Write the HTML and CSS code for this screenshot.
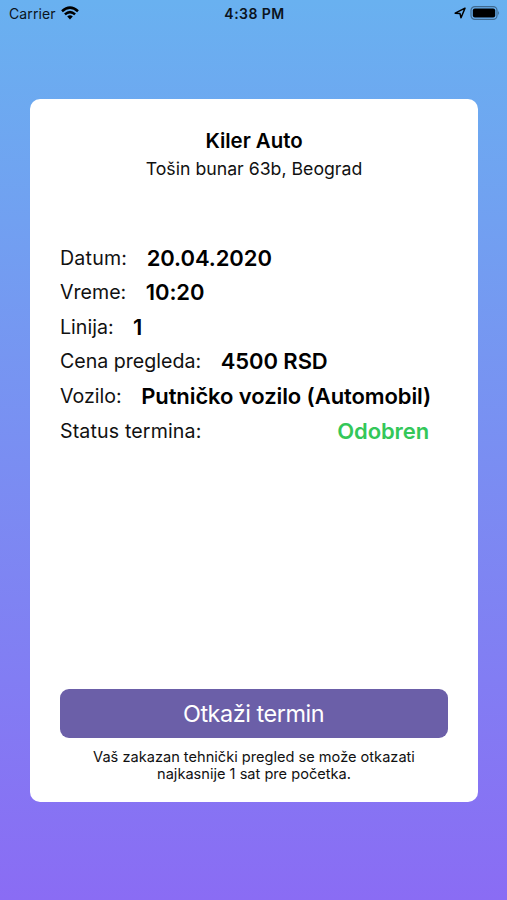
FILE: index.html
```html
<!DOCTYPE html>
<html lang="sr">
<head>
<meta charset="utf-8">
<title>Kiler Auto</title>
<link rel="stylesheet" href="styles.css">
</head>
<body>
<header class="status">
  <div class="carrier"><span class="carrier-name">Carrier</span>
    <svg class="wifi" viewBox="0 0 18 14" width="18" height="14"><g fill="none" stroke="#000" stroke-width="2.5"><path d="M1 5.2Q9-2 17 5.2"/><path d="M3.9 8.4Q9 3.9 14.1 8.4"/></g><path d="M6.2 10.4Q9 8.1 11.8 10.4L9 13.4z"/></svg>
  </div>
  <span class="time">4:38 PM</span>
  <div class="right">
    <svg viewBox="0 0 12 12" width="12" height="12"><path d="M1.2 6.2 11 1.2 7 10.8 6 6.6z" fill="none" stroke="#000" stroke-width="1.5" stroke-linejoin="round"/></svg>
    <svg viewBox="0 0 30 14" width="30" height="14"><rect x="1" y=".6" width="26" height="12.8" rx="3.8" fill="none" stroke="#000" stroke-opacity=".4" stroke-width="1.2"/><rect x="2.8" y="2.5" width="22.4" height="9" rx="2"/><path d="M28.2 4.8q1.8 2.2 0 4.4z" fill-opacity=".45"/></svg>
  </div>
</header>
<main class="card">
  <h1 class="name">Kiler Auto</h1>
  <p class="address">Tošin bunar 63b, Beograd</p>
  <dl class="details">
    <div class="row"><dt class="date">Datum:</dt><dd>20.04.2020</dd></div>
    <div class="row"><dt>Vreme:</dt><dd>10:20</dd></div>
    <div class="row"><dt>Linija:</dt><dd>1</dd></div>
    <div class="row"><dt>Cena pregleda:</dt><dd>4500 RSD</dd></div>
    <div class="row"><dt>Vozilo:</dt><dd class="vehicle">Putničko vozilo (Automobil)</dd></div>
    <div class="row"><dt class="state">Status termina:</dt><dd class="approved">Odobren</dd></div>
  </dl>
  <button class="cancel">Otkaži termin</button>
  <p class="note">Vaš zakazan tehnički pregled se može otkazati<br>najkasnije 1 sat pre početka.</p>
</main>
</body>
</html>
```
FILE: styles.css
```css
* { box-sizing: border-box; margin: 0; padding: 0; }
body { width: 507px; height: 900px; overflow: hidden; font-family: Inter, sans-serif; color: #111; background: linear-gradient(#69b1f0, #8a6cf4); }
.status { height: 26px; padding: 0 7px 0 9px; display: grid; grid-template-columns: 1fr auto 1fr; align-items: center; font-size: 14px; color: #0b1420; }
.carrier { display: flex; align-items: center; gap: 5px; }
.carrier-name { letter-spacing: .1px; padding-top: 1px; }
.time { font-weight: 600; letter-spacing: .45px; padding-top: 1px; }
.right { display: flex; align-items: center; justify-content: flex-end; gap: 4px; }
.card { width: 447.5px; height: 703.5px; margin: 72.5px 0 0 30px; padding: 28.5px 29.5px 0 30px; border-radius: 10px; background: #fff; display: flex; flex-direction: column; text-align: center; }
.name { font-size: 20.4px; line-height: 28px; font-weight: 600; color: #000; }
.address { font-size: 17.7px; line-height: 28px; }
.details { margin-top: 57.7px; text-align: left; }
.row { display: flex; height: 34.6px; line-height: 34.6px; white-space: nowrap; font-size: 19.6px; gap: 19.5px; }
.row .date { letter-spacing: .2px; }
.row .state { letter-spacing: .14px; }
.row dd { font-size: 22px; font-weight: 600; color: #000; letter-spacing: -.07px; }
.row .vehicle { letter-spacing: -.09px; }
.row .approved { color: #34c759; margin-left: auto; margin-right: 19px; letter-spacing: -.1px; }
.cancel { margin-top: 240.3px; height: 49px; flex: none; border: 0; border-radius: 9px; background: #6b5fa8; color: #fff; font: 23.4px Inter, sans-serif; letter-spacing: -.45px; padding-right: 1px; }
.note { margin-top: 11px; font-size: 14.6px; line-height: 17px; }
```
